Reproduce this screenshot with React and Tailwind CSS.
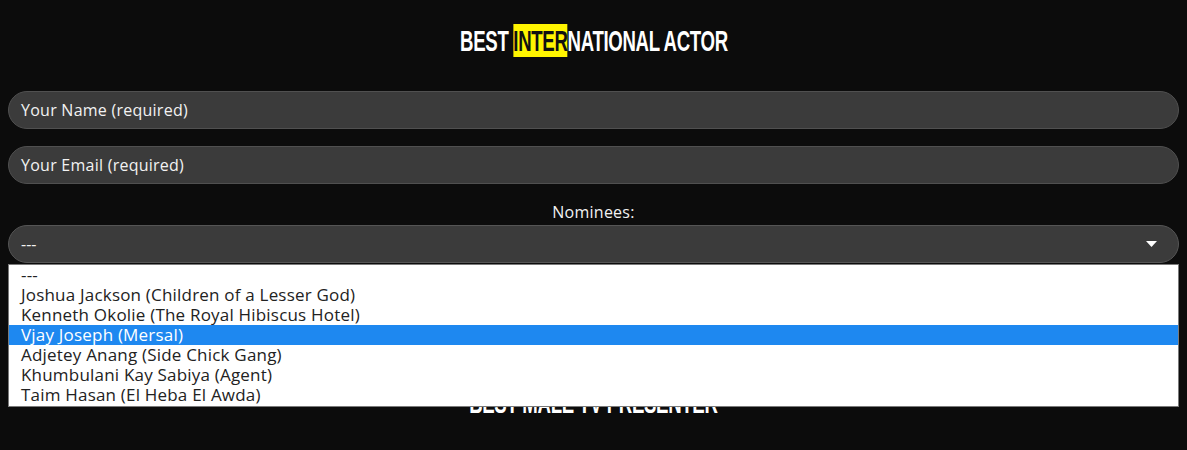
import React from "react";

const nominees = [
  "---",
  "Joshua Jackson (Children of a Lesser God)",
  "Kenneth Okolie (The Royal Hibiscus Hotel)",
  "Vjay Joseph (Mersal)",
  "Adjetey Anang (Side Chick Gang)",
  "Khumbulani Kay Sabiya (Agent)",
  "Taim Hasan (El Heba El Awda)",
];

const bodyFont = { fontFamily: '"Open Sans", "Liberation Sans", sans-serif' };

function Heading({ children }) {
  return (
    <div className="flex justify-center">
      <h2
        className="inline-block font-bold text-white text-[30px] leading-[35px] tracking-[-0.5px] scale-x-[0.62]"
        style={{ fontFamily: '"Liberation Sans Narrow", "Liberation Sans", sans-serif' }}
      >
        {children}
      </h2>
    </div>
  );
}

export default function App() {
  return (
    <div className="min-h-[450px] w-full bg-[#0c0c0c] px-2 pt-[23px] pb-10" style={bodyFont}>
      <Heading>
        BEST <span className="bg-[#fff500] text-[#111]">INTER</span>NATIONAL ACTOR
      </Heading>

      <div className="mt-[33px] flex flex-col gap-[17px]">
        <div className="flex h-[38px] items-center rounded-full border border-[#505050] bg-[#3b3b3b] px-3 text-[16px] tracking-[0.25px] text-[#f2f2f2]">
          Your Name (required)
        </div>
        <div className="flex h-[38px] items-center rounded-full border border-[#505050] bg-[#3b3b3b] px-3 text-[16px] tracking-[0.25px] text-[#f2f2f2]">
          Your Email (required)
        </div>
      </div>

      <div className="mt-[16px] text-center text-[16px] tracking-[0.25px] leading-[24px] text-[#f2f2f2]">Nominees:</div>

      <div className="relative mt-[1px]">
        <div className="flex h-[38px] items-center justify-between rounded-full border border-[#555] bg-[#3b3b3b] pl-3 pr-[21px] text-[16px] text-[#f2f2f2]">
          <span>---</span>
          <svg width="11" height="6" viewBox="0 0 11 6">
            <path d="M0 0 L11 0 L5.5 6 Z" fill="#ffffff" />
          </svg>
        </div>

        <div className="absolute left-0 right-0 top-[39px] z-10 border border-[#7a7a7a] bg-white pb-[1px]">
          {nominees.map((n, i) => (
            <div
              key={i}
              className={
                "h-[20px] px-3 text-[17px] tracking-[0.2px] leading-[20px] " +
                (i === 3 ? "bg-[#1e88f0] text-white" : "text-[#222]")
              }
            >
              {n}
            </div>
          ))}
        </div>

        <div className="mt-[122px]">
          <Heading>BEST MALE TV PRESENTER</Heading>
        </div>
      </div>
    </div>
  );
}
